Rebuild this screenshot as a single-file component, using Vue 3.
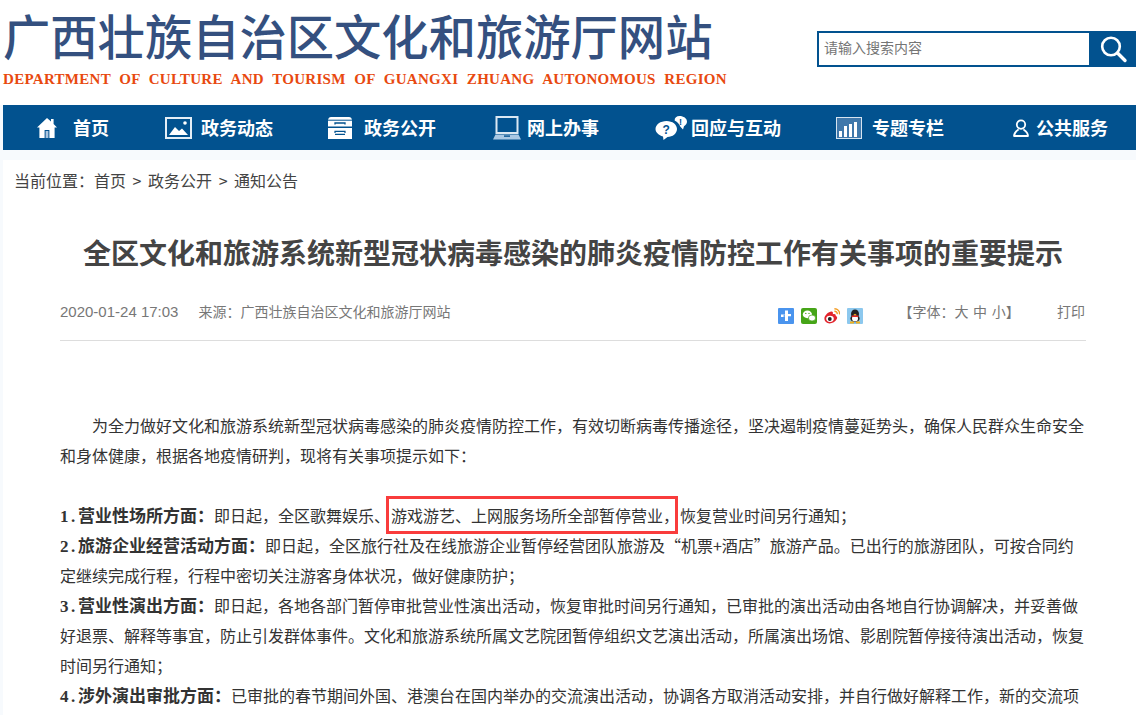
<script setup>
const navItems = [
  { label: '首页', icon: 'home', w: 128, gap: 16 },
  { label: '政务动态', icon: 'pic', w: 163, gap: 9 },
  { label: '政务公开', icon: 'box', w: 165, gap: 12 },
  { label: '网上办事', icon: 'laptop', w: 162, gap: 6 },
  { label: '回应与互动', icon: 'chat', w: 181, gap: 4 },
  { label: '专题专栏', icon: 'chart', w: 177, gap: 10 },
  { label: '公共服务', icon: 'user', w: 120, gap: 7 }
]
const navColumns = navItems.map(i => i.w + 'px').join(' ')
</script>

<template>
  <div class="page">
    <header class="top">
      <div class="brand">
        <div class="brand-cn">广西壮族自治区文化和旅游厅网站</div>
        <div class="brand-en">DEPARTMENT OF CULTURE AND TOURISM OF GUANGXI ZHUANG AUTONOMOUS REGION</div>
      </div>
      <form class="search" @submit.prevent>
        <input class="search-input" placeholder="请输入搜索内容" />
        <button class="search-btn" type="button" aria-label="搜索">
          <svg width="30" height="30" viewBox="0 0 30 30" fill="none" stroke="#fff">
            <circle cx="13" cy="12.5" r="8.8" stroke-width="2.6" />
            <path d="M19.5 19 L27 26.5" stroke-width="3.4" stroke-linecap="round" />
          </svg>
        </button>
      </form>
    </header>

    <nav class="nav" :style="{ gridTemplateColumns: navColumns }">
      <a v-for="item in navItems" :key="item.label" class="nav-item" :style="{ gap: item.gap + 'px' }">
        <svg v-if="item.icon === 'home'" width="20" height="22" viewBox="0 0 20 22" fill="#fff">
          <path d="M10 1 L14 4.6 V2 H16.6 V7 L20 10.4 H17.6 V21 H12.4 V13 H7.6 V21 H2.4 V10.4 H0 Z" />
          <rect x="8.6" y="14" width="2.8" height="7" fill="#a9c4de" />
        </svg>
        <svg v-else-if="item.icon === 'pic'" width="27" height="22" viewBox="0 0 27 22">
          <rect x="1" y="1" width="25" height="20" fill="none" stroke="#e4eef6" stroke-width="2" />
          <path d="M4 18 L10 10 L14 14 L17 11.5 L23 18 Z" fill="#fff" />
          <circle cx="20" cy="6" r="1.8" fill="#fff" />
        </svg>
        <svg v-else-if="item.icon === 'box'" width="24" height="22" viewBox="0 0 24 22" fill="#fff">
          <path d="M3 0 H21 Q23.5 0 24 3 V9.5 H0 V3 Q0.5 0 3 0 Z" />
          <path d="M0 11 H24 V22 H0 Z" />
          <path d="M0 3.2 H24" stroke="#02528f" stroke-width="1" />
          <path d="M7 7.6 V6 H17 V7.6" fill="none" stroke="#02528f" stroke-width="1.3" />
          <path d="M7 16 V14.4 H17 V16 M7 17.4 H17" fill="none" stroke="#02528f" stroke-width="1.2" />
        </svg>
        <svg v-else-if="item.icon === 'laptop'" width="28" height="24" viewBox="0 0 28 24">
          <rect x="3.5" y="1" width="21" height="16" fill="none" stroke="#dbe8f3" stroke-width="2" />
          <path d="M2.5 18.5 H25.5 L28 23.4 H0 Z" fill="#a9c8e4" />
          <rect x="11" y="19.4" width="6" height="1.4" fill="#02528f" />
        </svg>
        <svg v-else-if="item.icon === 'chat'" width="32" height="24" viewBox="0 0 32 24">
          <path d="M11.5 5 C17.5 5 22 8.6 22 13 C22 17.4 17.5 21 12.5 21 L8.5 24 L8 20.4 C3.8 19.4 0.5 16.4 0.5 13 C0.5 8.6 5.5 5 11.5 5 Z" fill="#fff" />
          <text x="11.2" y="18" font-size="12" font-weight="700" text-anchor="middle" fill="#02528f" font-family="Liberation Sans, sans-serif">?</text>
          <path d="M24.5 0 C28.5 0 32 2.4 32 5.6 C32 7.6 30.8 9.2 29 10.2 L28 13.4 L25.4 10.8 C24.4 8 22.6 5.8 19.6 4.4 C19.6 1.6 21.6 0 24.5 0 Z" fill="#fff" />
          <text x="25.6" y="9" font-size="9" font-weight="700" text-anchor="middle" fill="#02528f" font-family="Liberation Sans, sans-serif">!</text>
        </svg>
        <svg v-else-if="item.icon === 'chart'" width="26" height="22" viewBox="0 0 26 22">
          <rect x="0.5" y="0.5" width="25" height="21" fill="#3f78ab" stroke="#d6e4f0" />
          <g fill="#fff">
            <rect x="3" y="14" width="3" height="6" />
            <rect x="8" y="9" width="3" height="11" />
            <rect x="13" y="7" width="3" height="13" />
            <rect x="18" y="5" width="3" height="15" />
          </g>
        </svg>
        <svg v-else width="16" height="18" viewBox="0 0 16 18" fill="none" stroke="#fff" stroke-width="1.8">
          <circle cx="8" cy="5.6" r="4.2" />
          <path d="M1 17 C1 13 4 11.6 5.6 10.4 M15 17 C15 13 12 11.6 10.4 10.4 M0.4 17 H15.6" />
        </svg>
        <span class="nav-label">{{ item.label }}</span>
      </a>
    </nav>

    <div class="strip"></div>

    <main class="content">
      <div class="crumb">当前位置：首页 &gt; 政务公开 &gt; 通知公告</div>

      <article class="article">
        <h1 class="title">全区文化和旅游系统新型冠状病毒感染的肺炎疫情防控工作有关事项的重要提示</h1>

        <div class="meta">
          <span class="date">2020-01-24 17:03</span>
          <span class="source">来源：广西壮族自治区文化和旅游厅网站</span>
          <div class="share">
            <svg width="16" height="16" viewBox="0 0 16 16">
              <rect width="16" height="16" rx="1" fill="#4a94ee" />
              <path d="M7 2.5 H10 V6 H13 V8.2 H10 V13 H7 V9 H3 V6.6 H7 Z" fill="#fff" />
              <rect x="5.6" y="6.6" width="1.2" height="2.4" fill="#4a94ee" />
            </svg>
            <svg width="16" height="16" viewBox="0 0 16 16">
              <rect width="16" height="16" rx="2" fill="#46a518" />
              <ellipse cx="6.4" cy="6.4" rx="4.6" ry="3.8" fill="#fff" />
              <ellipse cx="11" cy="10" rx="3.6" ry="3" fill="#fff" stroke="#46a518" stroke-width="0.7" />
              <circle cx="4.8" cy="5.4" r=".7" fill="#46a518" />
              <circle cx="8" cy="5.4" r=".7" fill="#46a518" />
            </svg>
            <svg width="16" height="16" viewBox="0 0 16 16">
              <path d="M10.4 0.8 C13.8 0.8 15.8 3.2 15.6 6.4 M10.4 3.2 C12.2 3.2 13.4 4.4 13.2 6.2" fill="none" stroke="#f39a1e" stroke-width="1.4" />
              <path d="M0.4 10.6 C0.4 7.4 4.8 3.6 7.4 3.6 C9 3.6 9.2 5 8.8 6.2 C10.8 5.6 12 6.2 11.8 8 C13.4 8.6 13.4 10 12.8 11 C11.6 13.6 8.4 15.4 5.6 15.4 C2.8 15.4 0.4 13.6 0.4 10.6 Z" fill="#e2232c" />
              <ellipse cx="6" cy="10.8" rx="3.8" ry="3.1" fill="#fff" />
              <circle cx="5.8" cy="11" r="1.9" fill="#222" />
            </svg>
            <svg width="16" height="16" viewBox="0 0 16 16">
              <rect width="16" height="16" rx="1" fill="#8cc8ee" />
              <ellipse cx="8" cy="6" rx="4" ry="4.6" fill="#222" />
              <ellipse cx="8" cy="10.4" rx="4.6" ry="3.8" fill="#222" />
              <ellipse cx="8" cy="10.6" rx="3" ry="3" fill="#fff" />
              <path d="M5 7.4 H11 L11.5 9 H4.5 Z" fill="#e62b1e" />
              <path d="M6.2 7 L8 5.8 L9.8 7 Z" fill="#f7b21a" />
              <path d="M3 13.6 H7 V15.4 H3 Z M9 13.6 H13 V15.4 H9 Z" fill="#f7b21a" />
            </svg>
          </div>
          <span class="font">【字体：大 中 小】</span>
          <span class="print">打印</span>
        </div>

        <div class="body">
          <p class="indent">为全力做好文化和旅游系统新型冠状病毒感染的肺炎疫情防控工作，有效切断病毒传播途径，坚决遏制疫情蔓延势头，确保人民群众生命安全和身体健康，根据各地疫情研判，现将有关事项提示如下：</p>
          <p class="blank"></p>
          <p><b class="num">1.</b><b class="label">营业性场所方面：</b>即日起，全区歌舞娱乐、<span class="mark">游戏游艺、上网服务场所全部暂停营业，</span>恢复营业时间另行通知；</p>
          <p><b class="num">2.</b><b class="label">旅游企业经营活动方面：</b>即日起，全区旅行社及在线旅游企业暂停经营团队旅游及“机票+酒店”旅游产品。已出行的旅游团队，可按合同约定继续完成行程，行程中密切关注游客身体状况，做好健康防护；</p>
          <p><b class="num">3.</b><b class="label">营业性演出方面：</b>即日起，各地各部门暂停审批营业性演出活动，恢复审批时间另行通知，已审批的演出活动由各地自行协调解决，并妥善做好退票、解释等事宜，防止引发群体事件。文化和旅游系统所属文艺院团暂停组织文艺演出活动，所属演出场馆、影剧院暂停接待演出活动，恢复时间另行通知；</p>
          <p><b class="num">4.</b><b class="label">涉外演出审批方面：</b>已审批的春节期间外国、港澳台在国内举办的交流演出活动，协调各方取消活动安排，并自行做好解释工作，新的交流项</p>
        </div>
      </article>
    </main>
  </div>
</template>

<style>
html, body {
  margin: 0;
  height: 715px;
  overflow: hidden;
  background: #fff;
}
</style>

<style scoped>
.page {
  height: 715px;
  overflow: hidden;
  background: #f7fafd;
  font-family: "Noto Sans CJK SC", sans-serif;
  box-sizing: border-box;
  padding-left: 3px;
}
.top {
  height: 105px;
  margin-left: -3px;
  padding-left: 3px;
  background: #fff;
  display: flex;
  justify-content: space-between;
  box-sizing: border-box;
}
.brand-cn {
  font-size: 47.3px;
  line-height: 48px;
  padding-top: 11px;
  font-weight: 500;
  color: #34507f;
  white-space: nowrap;
}
.brand-en {
  font-family: "Liberation Serif", serif;
  font-weight: 700;
  font-size: 15px;
  line-height: 18px;
  margin-top: 11px;
  letter-spacing: 0.3px;
  word-spacing: 4.5px;
  color: #e8490f;
  white-space: nowrap;
}
.search {
  display: flex;
  width: 319px;
  height: 36px;
  margin-top: 31px;
  border: 2px solid #02528f;
  border-right: 0;
  box-sizing: border-box;
}
.search-input {
  flex: 1;
  min-width: 0;
  border: 0;
  outline: 0;
  padding: 0 5px 4px;
  font: 14px "Noto Sans CJK SC", sans-serif;
  background: #fff;
}
.search-input::placeholder {
  color: #757575;
}
.search-btn {
  width: 47px;
  border: 0;
  padding: 0;
  background: #02528f;
  display: flex;
  align-items: center;
  justify-content: center;
}
.nav {
  height: 45px;
  display: grid;
  padding-left: 34px;
  background: #02528f;
  box-sizing: border-box;
}
.nav-item {
  display: flex;
  align-items: center;
  color: #fff;
}
.nav-label {
  font-size: 18px;
  font-weight: 700;
  line-height: 45px;
  white-space: nowrap;
}
.strip {
  height: 10px;
}
.content {
  background: #fff;
  height: 555px;
  overflow: hidden;
}
.crumb {
  padding: 6px 0 0 11px;
  font-size: 16px;
  line-height: 28px;
  word-spacing: 3px;
  color: #444;
}
.article {
  margin: 0 50px 0 57px;
}
.title {
  margin: 38px 0 0;
  font-size: 28px;
  line-height: 40px;
  font-weight: 700;
  color: #444;
  text-align: center;
  white-space: nowrap;
}
.meta {
  display: flex;
  align-items: center;
  height: 55px;
  margin-top: 14px;
  padding: 4px 0 8px;
  box-sizing: border-box;
  border-bottom: 1px solid #ddd;
  font-size: 14px;
  color: #777;
  white-space: nowrap;
}
.date {
  flex: none;
  font-family: "Liberation Sans", sans-serif;
  font-size: 15px;
}
.source {
  flex: none;
  margin-left: 20px;
}
.share {
  flex: none;
  display: flex;
  gap: 7px;
  margin-left: 328px;
  margin-top: 10px;
}
.font {
  flex: none;
  margin-left: 35px;
  word-spacing: 1.5px;
}
.print {
  flex: none;
  margin-left: auto;
  padding-right: 1px;
}
.body {
  margin-top: 69px;
  font-size: 16px;
  line-height: 30px;
  color: #333;
}
.body p {
  margin: 0;
}
.indent {
  text-indent: 32px;
}
.blank {
  height: 30px;
}
.label {
  font-size: 17px;
  line-height: 0;
}
.num {
  font-family: "Liberation Serif", serif;
  font-size: 17px;
  line-height: 0;
  letter-spacing: 2.6px;
}
.mark {
  position: relative;
  margin: 0 1px;
}
.mark::after {
  content: "";
  position: absolute;
  left: -5px;
  right: 1px;
  top: -7px;
  bottom: -7px;
  border: 3px solid #f93c3c;
}
</style>
